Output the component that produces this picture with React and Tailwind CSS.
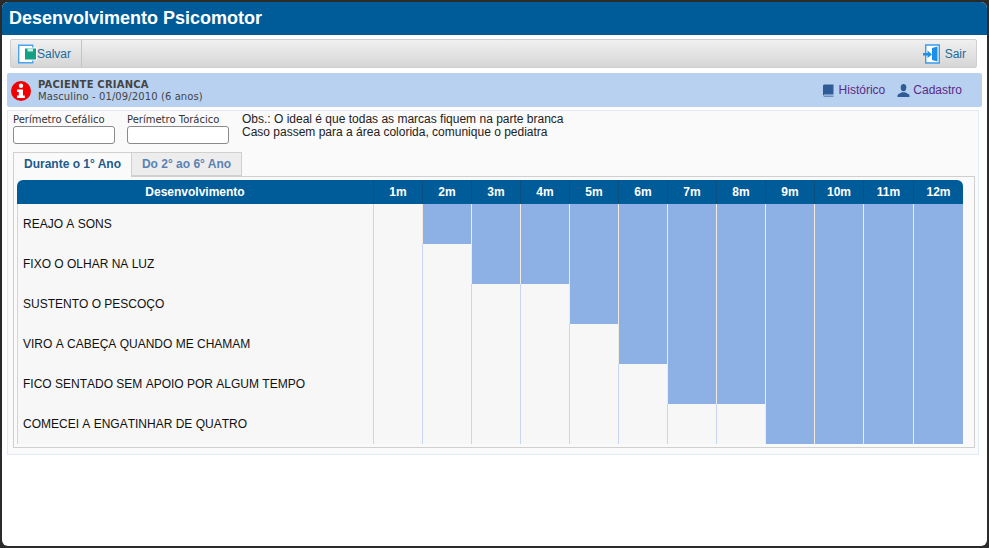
import React from "react";

const months = ["1m", "2m", "3m", "4m", "5m", "6m", "7m", "8m", "9m", "10m", "11m", "12m"];

// how many rows are coloured in each month
const filled = [0, 1, 2, 2, 3, 4, 5, 5, 6, 6, 6, 6];

const rows = [
  "REAJO A SONS",
  "FIXO O OLHAR NA LUZ",
  "SUSTENTO O PESCOÇO",
  "VIRO A CABEÇA QUANDO ME CHAMAM",
  "FICO SENTADO SEM APOIO POR ALGUM TEMPO",
  "COMECEI A ENGATINHAR DE QUATRO",
];

function SaveIcon() {
  return (
    <svg width="20" height="20" viewBox="0 0 20 20">
      <path d="M1.7 1.2h14v17.6h-14z" fill="#fff" stroke="#4aa3ee" strokeWidth="1.4" />
      <path d="M7 3.5h13v13H7z" fill="#fff" />
      <path d="M8 4.5h11v11H8z" fill="#14a085" />
      <path d="M10.5 4.5h5.5v3h-5.5z" fill="#c9ece4" />
    </svg>
  );
}

function ExitIcon() {
  return (
    <svg width="17" height="20" viewBox="0 0 17 20">
      <path d="M2.7 1h13.6v18H2.7z" fill="#fff" stroke="#3a9bea" strokeWidth="1.4" />
      <path d="M9 4l5.5-1.5v15L9 16z" fill="#1c8fe8" />
      <path d="M0 9h4.5V6.5L9 10.5 4.5 14v-2.5H0z" fill="#1c8fe8" />
    </svg>
  );
}

function BookIcon() {
  return (
    <svg width="12" height="13" viewBox="0 0 12 13">
      <path d="M1 1.5 2 .5h9.5v10H2.5l-1.5 1z" fill="#2f5c97" />
      <path d="M1 11.5h10.5V13H2z" fill="#6d8fbb" />
    </svg>
  );
}

function UserIcon() {
  return (
    <svg width="13" height="13" viewBox="0 0 13 13">
      <ellipse cx="6.5" cy="3.6" rx="2.8" ry="3.6" fill="#2f5c97" />
      <path d="M0.5 13v-1.6c0-1.4 2.8-2 4.4-3.2h3.2c1.6 1.2 4.4 1.8 4.4 3.2V13z" fill="#2f5c97" />
    </svg>
  );
}

function AlertIcon() {
  return (
    <svg width="20" height="20" viewBox="0 0 20 20">
      <circle cx="10" cy="10" r="10" fill="#f00000" />
      <circle cx="10" cy="4.8" r="2.2" fill="#fff" />
      <path d="M6 8.5h6v6h1.8V17H6v-2.5h1.8V11H6z" fill="#fff" />
    </svg>
  );
}

export default function App() {
  return (
    <div className="w-[989px] h-[548px] bg-[#2b2b2b] overflow-hidden pt-[2px] pl-[2px] font-['Liberation_Sans',Arial,sans-serif]">
      <div className="h-[544px] w-[985px] bg-white rounded-[6px] overflow-hidden flex flex-col">
        {/* Title */}
        <div className="h-[33px] shrink-0 bg-[#005c99] flex items-center pl-[7px] text-white text-[18px] font-bold">
          Desenvolvimento Psicomotor
        </div>

        {/* Toolbar */}
        <div className="mt-[4px] ml-[8px] w-[967px] h-[29px] shrink-0 border border-[#cfcfcf] rounded-[2px] bg-gradient-to-b from-[#f0f0f0] to-[#d6d6d6] flex items-center justify-between">
          <div className="h-full flex items-center pl-[6px] pr-[10px] border-r border-[#c4c4c4] text-[12px] text-[#1a6a9a]">
            <SaveIcon />
            <span>Salvar</span>
          </div>
          <div className="flex items-center pr-[10px] gap-[5px] text-[12px] text-[#1a6a9a]">
            <ExitIcon />
            <span>Sair</span>
          </div>
        </div>

        {/* Patient */}
        <div className="mt-[5px] ml-[5px] w-[975px] h-[34px] shrink-0 bg-[#b9d1f1] rounded-[2px] flex items-center justify-between pl-[4px] pr-[20px]">
          <div className="flex items-center gap-[7px]">
            <span className="mt-[1px]">
              <AlertIcon />
            </span>
            <div className="pt-[2px] font-['DejaVu_Sans',Verdana,sans-serif] text-[10px] leading-[12px] text-[#444]">
              <div className="font-bold tracking-[0.2px]">PACIENTE CRIANCA</div>
              <div className="tracking-[0.1px]">Masculino - 01/09/2010 (6 anos)</div>
            </div>
          </div>
          <div className="flex items-center text-[12px] text-[#5b2a86]">
            <BookIcon />
            <span className="ml-[5px]">Histórico</span>
            <span className="ml-[12px]">
              <UserIcon />
            </span>
            <span className="ml-[3px]">Cadastro</span>
          </div>
        </div>

        {/* Panel */}
        <div className="mt-[3px] ml-[5px] w-[972px] h-[345px] shrink-0 border border-[#e3eaf7] bg-[#fafafa] pl-[5px] pt-[2px]">
          <div className="flex h-[34px]">
            <div className="w-[114px] pt-[1px] font-['DejaVu_Sans',Verdana,sans-serif]">
              <div className="text-[10px] leading-[12px] text-[#333]">Perímetro Cefálico</div>
              <input className="block w-[102px] h-[18px] bg-white border border-[#8a8a8a] rounded-[3px]" />
            </div>
            <div className="w-[115px] pt-[1px] font-['DejaVu_Sans',Verdana,sans-serif]">
              <div className="text-[10px] leading-[12px] text-[#333]">Perímetro Torácico</div>
              <input className="block w-[102px] h-[18px] bg-white border border-[#8a8a8a] rounded-[3px]" />
            </div>
            <div className="text-[12px] leading-[13px] text-[#222]">
              <div>Obs.: O ideal é que todas as marcas fiquem na parte branca</div>
              <div>Caso passem para a área colorida, comunique o pediatra</div>
            </div>
          </div>

          {/* Tabs */}
          <div className="mt-[5px] flex h-[24px] relative z-10">
            <div className="w-[119px] h-[25px] pb-[2px] bg-[#fafafa] border border-b-0 border-[#d0d0d0] flex items-center justify-center text-[12px] font-bold text-[#1d5a8a]">
              Durante o 1° Ano
            </div>
            <div className="w-[110px] h-[24px] bg-[#ededed] border border-l-0 border-[#d0d0d0] flex items-center justify-center text-[12px] font-bold text-[#5a82b4]">
              Do 2° ao 6° Ano
            </div>
          </div>

          <div className="w-[962px] h-[272px] border border-[#cfcfcf] pt-[3px] pl-[3px]">
            <div className="w-[946px] grid grid-cols-[356px_repeat(10,49px)_50px_50px] grid-rows-[24px_repeat(6,40px)]">
              {/* Header */}
              <div className="col-start-1 row-start-1 bg-[#005c99] rounded-tl-[6px] flex items-center justify-center text-white text-[12px] font-bold">
                Desenvolvimento
              </div>
              {months.map((m, i) => (
                <div
                  key={m}
                  className={`row-start-1 bg-[#005c99] border-l border-[#0a4f80] flex items-center justify-center text-white text-[12px] font-bold ${
                    i === 11 ? "rounded-tr-[6px]" : ""
                  }`}
                >
                  {m}
                </div>
              ))}

              {/* Rows */}
              {rows.map((label, r) => (
                <React.Fragment key={label}>
                  <div className="col-start-1 bg-[#f7f7f7] border-l border-[#c9d6f2] flex items-center pl-[5px] text-[12px] text-[#111] [font-kerning:none]">
                    {label}
                  </div>
                  {months.map((m, i) => (
                    <div
                      key={m}
                      className={
                        r < filled[i]
                          ? "bg-[#8db0e5] border-l border-[#f2ecdf]"
                          : "bg-[#f7f7f7] border-l border-[#c9d6f2]"
                      }
                    />
                  ))}
                </React.Fragment>
              ))}
            </div>
          </div>
        </div>
      </div>
    </div>
  );
}
